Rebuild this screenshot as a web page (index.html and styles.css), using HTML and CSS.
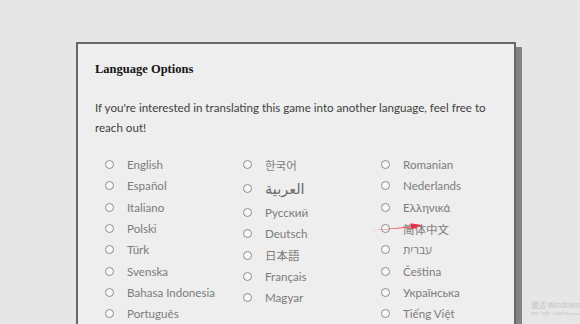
FILE: index.html
```html
<!DOCTYPE html>
<html lang="en">
<head>
<meta charset="utf-8">
<title>Language Options</title>
<link rel="stylesheet" href="styles.css">
</head>
<body>
<div class="card">
  <h2 class="title">Language Options</h2>
  <p class="intro">If you're interested in translating this game into another language, feel free to reach out!</p>
  <div class="langs">
    <div class="col">
      <label class="opt"><input type="radio" name="lang"><span>English</span></label>
      <label class="opt"><input type="radio" name="lang"><span>Español</span></label>
      <label class="opt"><input type="radio" name="lang"><span>Italiano</span></label>
      <label class="opt"><input type="radio" name="lang"><span>Polski</span></label>
      <label class="opt"><input type="radio" name="lang"><span>Türk</span></label>
      <label class="opt"><input type="radio" name="lang"><span>Svenska</span></label>
      <label class="opt"><input type="radio" name="lang"><span>Bahasa Indonesia</span></label>
      <label class="opt"><input type="radio" name="lang"><span>Português</span></label>
    </div>
    <div class="col">
      <label class="opt"><input type="radio" name="lang"><span class="cjk">한국어</span></label>
      <label class="opt ar"><input type="radio" name="lang"><span class="arabic">العربية</span></label>
      <label class="opt"><input type="radio" name="lang"><span>Русский</span></label>
      <label class="opt"><input type="radio" name="lang"><span>Deutsch</span></label>
      <label class="opt"><input type="radio" name="lang"><span class="cjk">日本語</span></label>
      <label class="opt"><input type="radio" name="lang"><span>Français</span></label>
      <label class="opt"><input type="radio" name="lang"><span>Magyar</span></label>
    </div>
    <div class="col">
      <label class="opt"><input type="radio" name="lang"><span>Romanian</span></label>
      <label class="opt"><input type="radio" name="lang"><span>Nederlands</span></label>
      <label class="opt"><input type="radio" name="lang"><span>Ελληνικά</span></label>
      <label class="opt"><input type="radio" name="lang"><span class="cjk">简体中文</span></label>
      <label class="opt"><input type="radio" name="lang"><span>עברית</span></label>
      <label class="opt"><input type="radio" name="lang"><span>Čeština</span></label>
      <label class="opt"><input type="radio" name="lang"><span>Українська</span></label>
      <label class="opt"><input type="radio" name="lang"><span>Tiếng Việt</span></label>
    </div>
  </div>
</div>
<svg class="arrow" width="56" height="14" viewBox="0 0 56 14">
  <path d="M0 10.5 L40 6.4 L39.6 3.2 L51 5.2 L40.4 9.4 L40.2 7.6 Z" fill="#ee2d47"/>
</svg>
<div class="watermark">
  <div class="wm1">激活 Windows</div>
  <div class="wm2">转到“设置”以激活 Windows。</div>
</div>
</body>
</html>
```

FILE: styles.css
```css
html, body {
  margin: 0;
  padding: 0;
}
body {
  background: #e6e6e6;
  width: 580px;
  height: 324px;
  overflow: hidden;
  position: relative;
  font-family: Lato, "Open Sans", sans-serif;
}
.card {
  margin: 42px 0 0 76px;
  width: 440px;
  background: #eeeeee;
  border: 2px solid #696969;
  box-shadow: 6px 5px 0 #838383;
  padding: 16px 17px 20px 17px;
  box-sizing: border-box;
}
.title {
  margin: 0;
  font-family: "Liberation Serif", "DejaVu Serif", serif;
  font-weight: bold;
  font-size: 12.5px;
  line-height: 18px;
  color: #151515;
}
.intro {
  margin: 20px 0 0 0;
  font-size: 11.6px;
  line-height: 20px;
  color: #404040;
}
.langs {
  display: grid;
  grid-template-columns: 138px 138px 138px;
  margin: 16px 0 0 9px;
}
.col {
  display: flex;
  flex-direction: column;
}
.opt {
  display: flex;
  align-items: center;
  height: 21.3px;
  font-size: 11.6px;
  color: #7c7c7c;
}
.opt.ar {
  height: 26.6px;
}
.opt input {
  appearance: none;
  -webkit-appearance: none;
  margin: 0 13px 0 1px;
  width: 9px;
  height: 9px;
  border: 1px solid #8e8e8e;
  border-radius: 50%;
  background: #f7f7f7;
  box-sizing: border-box;
  flex: none;
}
.cjk {
  font-family: "Noto Sans CJK KR", "Noto Sans CJK SC", sans-serif;
  font-size: 11.5px;
}
.arabic {
  font-family: "DejaVu Sans", "Noto Sans", sans-serif;
  font-size: 14.5px;
  color: #6a6a6a;
}
.arrow {
  position: absolute;
  left: 371px;
  top: 220px;
}
.watermark {
  position: absolute;
  left: 531px;
  top: 299px;
  color: #c4c4c4;
  white-space: nowrap;
  font-family: "Noto Sans CJK SC", sans-serif;
}
.wm1 {
  font-size: 7.5px;
  line-height: 11px;
}
.wm2 {
  font-size: 3.6px;
  line-height: 8px;
}
```
